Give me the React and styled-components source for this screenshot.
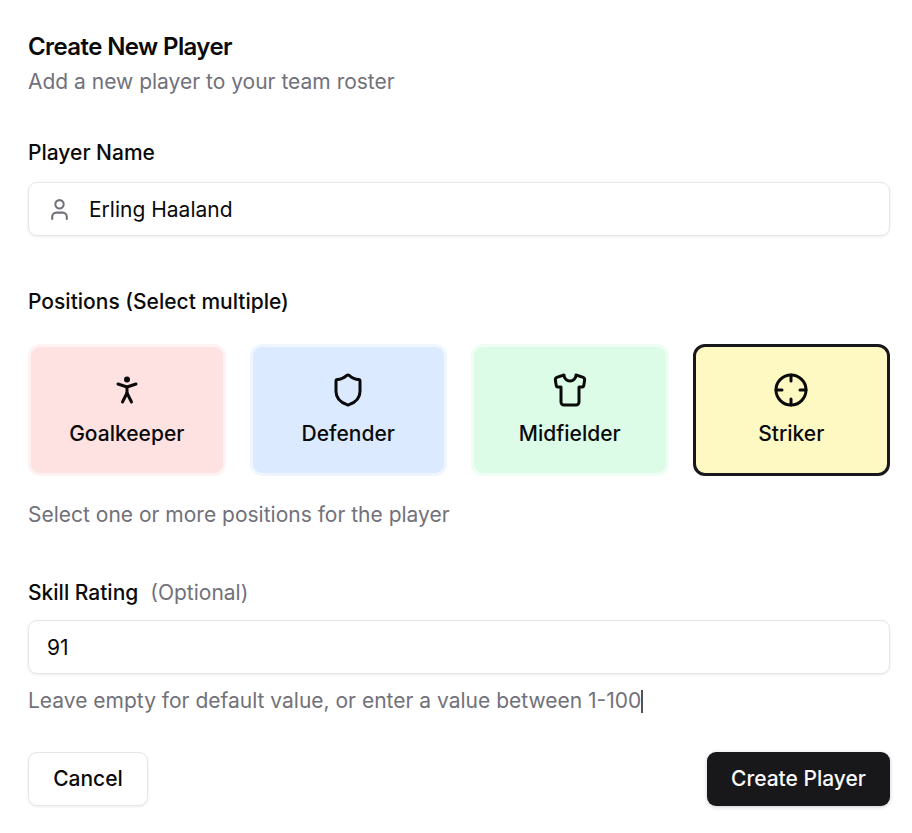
import React from 'react'
import styled, { createGlobalStyle } from 'styled-components'
import { User, PersonStanding, Shield, Shirt, Crosshair } from 'lucide-react'

const GlobalStyle = createGlobalStyle`
  html, body {
    margin: 0;
    background: #fff;
  }
  body {
    font-family: Inter, 'Noto Sans', sans-serif;
    color: #0a0a0a;
  }
`

const Page = styled.form`
  width: 912px;
  height: 833px;
  box-sizing: border-box;
  padding: 32px 22px 0 28px;
  display: flex;
  flex-direction: column;
  overflow: hidden;
`

const Title = styled.h2`
  margin: 0;
  font-size: 24px;
  line-height: 30px;
  font-weight: 600;
  letter-spacing: -0.6px;
`

const Subtitle = styled.p`
  margin: 8px 0 0;
  font-size: 21px;
  line-height: 24px;
  color: #71717a;
`

const Label = styled.label`
  display: block;
  font-size: 21px;
  line-height: 28px;
  font-weight: 500;
`

const NameLabel = styled(Label)`
  margin-top: 45px;
`

const Field = styled.div`
  display: flex;
  align-items: center;
  gap: 17px;
  height: 54px;
  box-sizing: border-box;
  margin-top: 15px;
  padding: 0 18px;
  border: 1px solid #e6e6e9;
  border-radius: 9px;
  box-shadow: 0 1px 3px rgba(0, 0, 0, 0.08);
  background: #fff;
`

const TextInput = styled.input`
  flex: 1;
  min-width: 0;
  border: 0;
  outline: 0;
  padding: 2px 0 0;
  background: transparent;
  font: 400 21px/28px Inter, sans-serif;
  color: #0a0a0a;
`

const PositionsLabel = styled(Label)`
  margin-top: 52px;
`

const PositionGrid = styled.div`
  display: grid;
  grid-template-columns: repeat(4, 1fr);
  gap: 24px;
  margin-top: 28px;
`

const PositionCard = styled.button`
  height: 132px;
  box-sizing: border-box;
  display: flex;
  flex-direction: column;
  align-items: center;
  justify-content: center;
  gap: 12px;
  padding: 0;
  border-radius: 12px;
  border: 3px solid ${(p) => (p.$selected ? '#18181b' : 'rgba(255, 255, 255, 0.55)')};
  background: ${(p) => p.$bg};
  color: #0a0a0a;
  font: 500 21px/28px Inter, sans-serif;
`

const Hint = styled.p`
  margin: 0;
  font-size: 21px;
  line-height: 28px;
  color: #71717a;
`

const PositionHint = styled(Hint)`
  margin-top: 25px;
`

const RatingRow = styled.div`
  display: flex;
  align-items: baseline;
  gap: 12px;
  margin-top: 50px;
`

const Optional = styled.span`
  font-size: 21px;
  line-height: 28px;
  color: #71717a;
`

const RatingField = styled(Field)`
  margin-top: 13px;
`

const RatingHint = styled(Hint)`
  margin-top: 13px;
  display: flex;
  align-items: center;
`

const Caret = styled.span`
  width: 1.5px;
  height: 23px;
  background: #52525b;
`

const Actions = styled.div`
  display: flex;
  justify-content: space-between;
  margin-top: 37px;
`

const CancelButton = styled.button`
  width: 120px;
  height: 54px;
  padding: 0;
  border: 1px solid #e6e6e9;
  border-radius: 9px;
  background: #fff;
  box-shadow: 0 1px 3px rgba(0, 0, 0, 0.08);
  color: #0a0a0a;
  font: 500 21px/28px Inter, sans-serif;
`

const SubmitButton = styled.button`
  width: 183px;
  height: 54px;
  padding: 0;
  border: 0;
  border-radius: 9px;
  background: #18181b;
  box-shadow: 0 1px 4px rgba(0, 0, 0, 0.2);
  color: #fafafa;
  font: 500 21px/28px Inter, sans-serif;
`

const positions = [
  { name: 'Goalkeeper', icon: PersonStanding, bg: '#fee2e2' },
  { name: 'Defender', icon: Shield, bg: '#dbeafe' },
  { name: 'Midfielder', icon: Shirt, bg: '#dcfce7' },
  { name: 'Striker', icon: Crosshair, bg: '#fef9c3', selected: true },
]

const App = () => (
  <>
    <GlobalStyle />
    <Page onSubmit={(e) => e.preventDefault()}>
      <Title>Create New Player</Title>
      <Subtitle>Add a new player to your team roster</Subtitle>

      <NameLabel htmlFor='player-name'>Player Name</NameLabel>
      <Field>
        <User size={25} color='#71717a' strokeWidth={2} />
        <TextInput id='player-name' defaultValue='Erling Haaland' />
      </Field>

      <PositionsLabel>Positions (Select multiple)</PositionsLabel>
      <PositionGrid>
        {positions.map(({ name, icon: Icon, bg, selected }) => (
          <PositionCard key={name} type='button' $bg={bg} $selected={selected}>
            <Icon size={36} strokeWidth={2} />
            {name}
          </PositionCard>
        ))}
      </PositionGrid>
      <PositionHint>Select one or more positions for the player</PositionHint>

      <RatingRow>
        <Label htmlFor='skill-rating'>Skill Rating</Label>
        <Optional>(Optional)</Optional>
      </RatingRow>
      <RatingField>
        <TextInput id='skill-rating' defaultValue='91' />
      </RatingField>
      <RatingHint>
        Leave empty for default value, or enter a value between 1-100
        <Caret />
      </RatingHint>

      <Actions>
        <CancelButton type='button'>Cancel</CancelButton>
        <SubmitButton type='submit'>Create Player</SubmitButton>
      </Actions>
    </Page>
  </>
)

export default App
